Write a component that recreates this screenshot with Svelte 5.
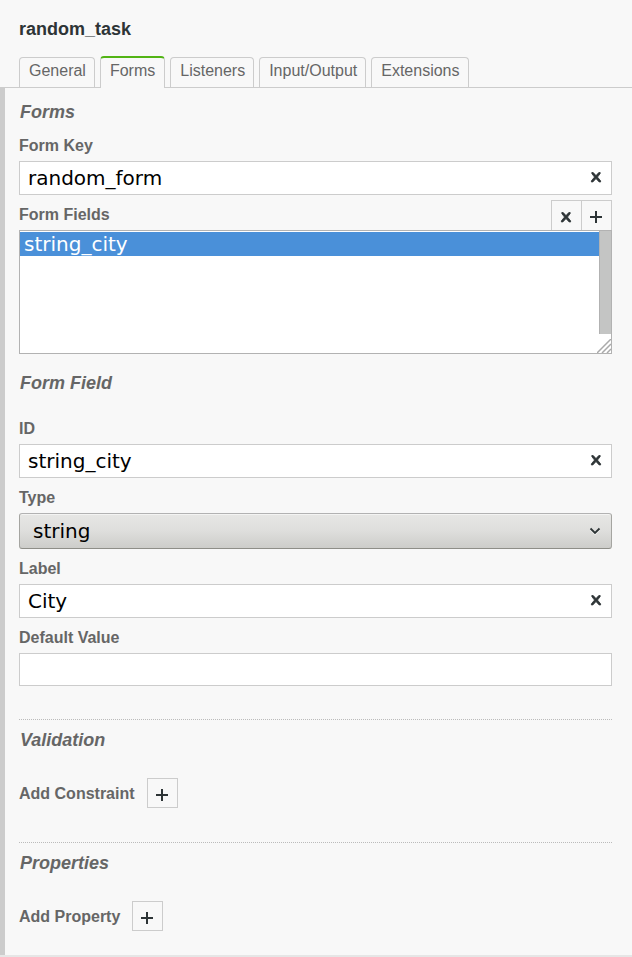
<script>
  const tabs = ['General', 'Forms', 'Listeners', 'Input/Output', 'Extensions'];
  let active = $state('Forms');
  let formKey = $state('random_form');
  let selected = $state('string_city');
  let id = $state('string_city');
  let type = $state('string');
  let label = $state('City');
  let defaultValue = $state('');
</script>

{#snippet cross()}
  <svg class="icon cross" viewBox="0 0 12 12" aria-hidden="true">
    <path d="M1.8 1.5H3.2L6 4.6 8.8 1.5H10.2V2.6L7.5 6.1 10.6 9.8V11H9.2L6 7.6 2.8 11H1.4V9.8L4.5 6.1 1.8 2.6Z" />
  </svg>
{/snippet}

{#snippet plus()}
  <svg class="icon" viewBox="0 0 12 12" aria-hidden="true">
    <path d="M5 0H7V5H12V7H7V12H5V7H0V5H5Z" />
  </svg>
{/snippet}

<main class="properties">
  <header>{'random_task'}</header>

  <nav class="tabs">
    {#each tabs as tab}
      <a href="#{tab}" class:active={tab === active} onclick={() => (active = tab)}>{tab}</a>
    {/each}
  </nav>

  <div class="panel">
    <section class="first">
      <h2>Forms</h2>
      <div class="field">
        <label for="form-key">Form Key</label>
        <div class="control">
          <input id="form-key" type="text" bind:value={formKey} />
          <button class="clear" aria-label="Clear form key" onclick={() => (formKey = '')}>{@render cross()}</button>
        </div>
      </div>
      <div class="field">
        <div class="list-head">
          <label for="form-fields">Form Fields</label>
          <div class="actions">
            <button class="box" aria-label="Remove field">{@render cross()}</button>
            <button class="box" aria-label="Add field">{@render plus()}</button>
          </div>
        </div>
        <div class="control">
          <select id="form-fields" class="list" size="5" bind:value={selected}>
            <option value="string_city">string_city</option>
          </select>
          <span class="track"></span>
          <svg class="grip" viewBox="0 0 14 14" aria-hidden="true">
            <path d="M0 14L14 0M5 14L14 5M10 14L14 10" />
          </svg>
        </div>
      </div>
    </section>

    <section class="detail">
      <h2>Form Field</h2>
      <div class="field">
        <label for="field-id">ID</label>
        <div class="control">
          <input id="field-id" type="text" bind:value={id} />
          <button class="clear" aria-label="Clear ID" onclick={() => (id = '')}>{@render cross()}</button>
        </div>
      </div>
      <div class="field">
        <label for="field-type">Type</label>
        <div class="control">
          <select id="field-type" class="drop" bind:value={type}>
            <option>string</option>
            <option>long</option>
            <option>boolean</option>
            <option>date</option>
            <option>enum</option>
          </select>
          <svg class="chevron" viewBox="0 0 12 8" aria-hidden="true">
            <path class="shine" d="M1.5 2.5L6 7 10.5 2.5" />
            <path d="M1.5 1.5L6 6 10.5 1.5" />
          </svg>
        </div>
      </div>
      <div class="field">
        <label for="field-label">Label</label>
        <div class="control">
          <input id="field-label" type="text" bind:value={label} />
          <button class="clear" aria-label="Clear label" onclick={() => (label = '')}>{@render cross()}</button>
        </div>
      </div>
      <div class="field">
        <label for="field-default">Default Value</label>
        <div class="control">
          <input id="field-default" type="text" bind:value={defaultValue} />
        </div>
      </div>
    </section>

    <section class="group">
      <h2>Validation</h2>
      <div class="add">
        <label for="add-constraint">Add Constraint</label>
        <button id="add-constraint" class="box">{@render plus()}</button>
      </div>
    </section>

    <section class="group">
      <h2>Properties</h2>
      <div class="add">
        <label for="add-property">Add Property</label>
        <button id="add-property" class="box">{@render plus()}</button>
      </div>
    </section>
  </div>
</main>

<style>
  :global(body) {
    background: #f8f8f8;
  }
  .properties,
  .properties * {
    box-sizing: border-box;
  }
  .properties {
    font: 16px/20px 'Liberation Sans', Arial, sans-serif;
    color: #666;
    background: #f8f8f8;
    border-bottom: 2px solid #e6e6e6;
  }
  header {
    padding: 18px 19px 0;
    font-size: 18px;
    font-weight: bold;
    line-height: 22px;
    color: #2d3436;
  }
  .tabs {
    display: flex;
    align-items: flex-end;
    gap: 5px;
    height: 48px;
    padding-left: 19px;
    border-bottom: 1px solid #ccc;
  }
  .tabs a {
    height: 30px;
    padding: 3px 8px 0 9px;
    border: 1px solid #ccc;
    border-bottom: 0;
    border-radius: 4px 4px 0 0;
    color: #666;
    text-decoration: none;
  }
  .tabs a.active {
    height: 32px;
    margin-bottom: -1px;
    padding: 3px 9px 0;
    border-top: 2px solid #52b415;
    background: #f8f8f8;
  }
  .panel {
    padding: 0 20px 24px 14px;
    border-left: 5px solid #ccc;
  }
  h2 {
    margin: 0;
    padding: 1px 0 0 1px;
    font-size: 18px;
    font-style: italic;
    line-height: 22px;
  }
  .first {
    padding-top: 12px;
  }
  .first h2 {
    margin-bottom: 3px;
  }
  .detail {
    padding: 17px 0 33px;
  }
  .detail h2 {
    margin-bottom: 15px;
  }
  .field {
    display: flex;
    flex-direction: column;
  }
  label {
    padding: 10px 0 5px;
    font-weight: bold;
  }
  .control {
    position: relative;
    display: flex;
  }
  input,
  select {
    width: 100%;
    margin: 0;
    border: 1px solid #ccc;
    border-radius: 0;
    background: #fff;
    color: #000;
    font: 20px/24px 'DejaVu Sans', sans-serif;
    outline: 0;
  }
  input {
    height: 34px;
    padding: 0 32px 0 8px;
  }
  #field-default {
    height: 33px;
  }
  button {
    display: flex;
    align-items: center;
    justify-content: center;
    padding: 0;
    border: 0;
    background: none;
  }
  .icon {
    width: 12px;
    height: 12px;
    fill: #2d3436;
  }
  .cross {
    stroke: #2d3436;
    stroke-width: 0.8;
  }
  .clear {
    position: absolute;
    top: 0;
    right: 0;
    width: 32px;
    height: 32px;
  }
  .list-head {
    display: flex;
    justify-content: space-between;
    align-items: flex-end;
  }
  .actions {
    display: flex;
  }
  .box {
    width: 31px;
    height: 30px;
    padding: 3px 1px 0 0;
    border: 1px solid #ccc;
    background: #f8f8f8;
  }
  .actions .box {
    border-bottom: 0;
  }
  .actions .box + .box {
    margin-left: -1px;
  }
  .list {
    height: 124px;
    padding: 1px 12px 0 0;
    border-color: #b2b2b2;
    overflow: hidden;
  }
  .list option {
    height: 24px;
    min-height: 24px;
    padding: 0 4px;
    line-height: 24px;
  }
  .list option:checked {
    background: #4a90d9 linear-gradient(#4a90d9, #4a90d9);
    color: #fff;
  }
  .track {
    position: absolute;
    top: 1px;
    right: 1px;
    width: 12px;
    height: 103px;
    border-left: 1px solid #b2b2b2;
    background: #c4c5c4;
  }
  .grip {
    position: absolute;
    right: 1px;
    bottom: 1px;
    width: 14px;
    height: 14px;
    fill: none;
    stroke: #aaa;
    stroke-width: 1.5;
  }
  .drop {
    height: 36px;
    padding: 0 32px 0 13px;
    border-color: #b2b2b2 #a5a5a1 #8e8e88;
    border-radius: 3px;
    background: linear-gradient(#e7e7e5, #dededc 50%, #cdcdca);
    box-shadow: inset 0 1px #f4f4f3;
    appearance: none;
  }
  .chevron {
    position: absolute;
    top: 14px;
    right: 11px;
    width: 12px;
    height: 8px;
    fill: none;
    stroke: #2d3436;
    stroke-width: 1.8;
    pointer-events: none;
  }
  .chevron .shine {
    stroke: #f4f4f3;
  }
  .group {
    padding: 8px 0 34px;
    border-top: 1px dotted #bbb;
  }
  .group:last-child {
    padding-bottom: 0;
  }
  .group h2 {
    margin-bottom: 27px;
  }
  .add {
    display: flex;
    align-items: center;
    gap: 12px;
  }
  .add label {
    padding: 2px 0 0;
  }
</style>
